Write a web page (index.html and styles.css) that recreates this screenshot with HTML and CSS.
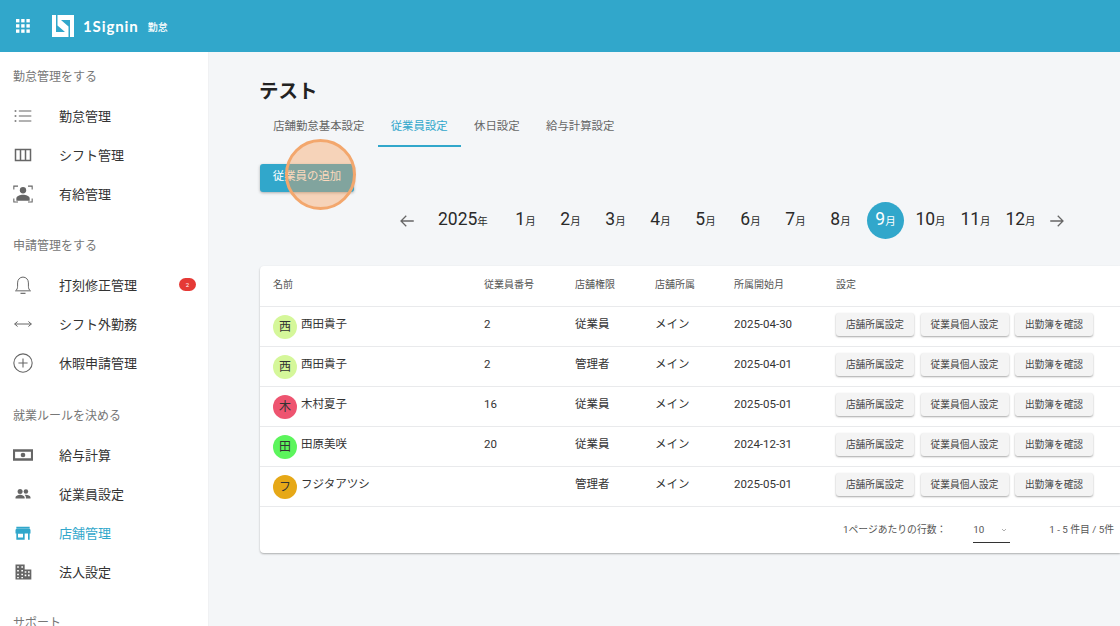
FILE: index.html
```html
<!DOCTYPE html>
<html lang="ja">
<head>
<meta charset="utf-8">
<title>1Signin 勤怠</title>
<link rel="stylesheet" href="styles.css">
</head>
<body>
<header class="topbar">
  <svg class="apps" viewBox="0 0 14 14"><g fill="#fff"><rect x="0" y="0" width="3.4" height="3.4"/><rect x="5.2" y="0" width="3.4" height="3.4"/><rect x="10.4" y="0" width="3.4" height="3.4"/><rect x="0" y="5.2" width="3.4" height="3.4"/><rect x="5.2" y="5.2" width="3.4" height="3.4"/><rect x="10.4" y="5.2" width="3.4" height="3.4"/><rect x="0" y="10.4" width="3.4" height="3.4"/><rect x="5.2" y="10.4" width="3.4" height="3.4"/><rect x="10.4" y="10.4" width="3.4" height="3.4"/></g></svg>
  <svg class="logo" viewBox="0 0 22 22"><path fill="#fff" fill-rule="evenodd" d="M0 0H22V22H0ZM4 0V17H13L5.500 10.500V0ZM18 22V5H9L16.500 11.500V22Z"/></svg>
  <span class="brand">1Signin</span>
  <span class="brand-sub">勤怠</span>
</header>
<div class="layout">
  <nav class="sidebar">
    <div class="nav-label">勤怠管理をする</div>
    <a class="nav-item"><svg class="ico" viewBox="0 0 24 24"><path d="M7 6h15M7 12h15M7 18h15" stroke="#666" stroke-width="1.4" fill="none"/><path d="M2 5h2v2H2zM2 11h2v2H2zM2 17h2v2H2z" fill="#666"/></svg><span>勤怠管理</span></a>
    <a class="nav-item"><svg class="ico" viewBox="0 0 24 24"><path d="M3 5.500h18v13H3zM9 5.500v13M15 5.500v13" stroke="#666" stroke-width="1.800" fill="none"/></svg><span>シフト管理</span></a>
    <a class="nav-item"><svg class="ico" viewBox="0 0 24 24"><path d="M1 6.500V2.500h5M18 2.500h5V6.500M1 17.500v4h5M23 17.500v4h-5" stroke="#666" stroke-width="1.300" fill="none"/><circle cx="12" cy="7.500" r="3.800" fill="#666"/><path d="M4 20v-2.500c0-3 4.500-4.500 8-4.500s8 1.500 8 4.500V20z" fill="#666"/></svg><span>有給管理</span></a>

    <div class="nav-label second">申請管理をする</div>
    <a class="nav-item"><svg class="ico" viewBox="0 0 24 24"><path d="M3 19c1.800-1.200 2.500-3 2.500-5.500v-4C5.500 5.500 8.200 2.500 12 2.500s6.500 3 6.500 7v4c0 2.500.7 4.300 2.500 5.500z" stroke="#666" stroke-width="1.200" fill="none"/><path d="M9 22h6" stroke="#666" stroke-width="1.400"/></svg><span>打刻修正管理</span><b class="badge">2</b></a>
    <a class="nav-item"><svg class="ico" viewBox="0 0 24 24"><path d="M2 12h20M5.500 9 2 12l3.500 3M18.500 9l3.500 3-3.500 3" stroke="#666" stroke-width="1.200" fill="none"/></svg><span>シフト外勤務</span></a>
    <a class="nav-item"><svg class="ico" viewBox="0 0 24 24"><circle cx="12" cy="12" r="11" stroke="#666" stroke-width="1.300" fill="none"/><path d="M12 6.500v11M6.500 12h11" stroke="#666" stroke-width="1.300"/></svg><span>休暇申請管理</span></a>

    <div class="nav-label third">就業ルールを決める</div>
    <a class="nav-item"><svg class="ico" viewBox="0 0 24 24"><path fill="#666" fill-rule="evenodd" d="M0 5h24v14H0zM2.500 8v8h19V8z"/><circle cx="12" cy="12" r="2.800" fill="#666"/></svg><span>給与計算</span></a>
    <a class="nav-item"><svg class="ico" viewBox="0 0 24 24"><circle cx="8.500" cy="9" r="3" fill="#666"/><circle cx="15.500" cy="9" r="2.700" fill="#666"/><path d="M3 17.500v-1.200c0-2 3.500-3.300 5.500-3.300s5.500 1.300 5.500 3.300v1.200zM15.500 17.500v-1.500c0-1.200-.6-2.200-1.500-2.900 3-.4 7 .9 7 2.900v1.500z" fill="#666"/></svg><span>従業員設定</span></a>
    <a class="nav-item active"><svg class="ico" viewBox="0 0 24 24"><path fill="#31a7cb" d="M4 4.500h16v2H4zM3 8l1-1h16l1 1v4.500h-1V20h-2v-7.500h-4V20H4v-7.500H3zM6 13v4.500h6V13z"/></svg><span>店舗管理</span></a>
    <a class="nav-item"><svg class="ico" viewBox="0 0 24 24"><path fill="#666" fill-rule="evenodd" d="M3 3h11v6h8v12H3zM5 5v2h2V5zM10 5v2h2V5zM5 9.500v2h2v-2zM10 9.500v2h2v-2zM5 14v2h2v-2zM10 14v2h2v-2zM5 18v1.500h2V18zM10 18v1.500h2V18zM14 11v2h2v-2zM18 11v2h2v-2zM14 15v2h2v-2zM18 15v2h2v-2z"/></svg><span>法人設定</span></a>

    <div class="nav-label fourth">サポート</div>
  </nav>

  <main class="content">
    <h1 class="title">テスト</h1>
    <div class="tabs">
      <a class="tab">店舗勤怠基本設定</a>
      <a class="tab active">従業員設定</a>
      <a class="tab">休日設定</a>
      <a class="tab">給与計算設定</a>
    </div>
    <button class="add-btn">従業員の追加</button>
    <div class="months">
      <svg class="arrow first" viewBox="0 0 24 24"><path d="M21 12H4M11 5 4 12l7 7" stroke="#666" stroke-width="1.700" fill="none"/></svg>
      <span class="year">2025<small>年</small></span>
      <span class="month">1<small>月</small></span>
      <span class="month">2<small>月</small></span>
      <span class="month">3<small>月</small></span>
      <span class="month">4<small>月</small></span>
      <span class="month">5<small>月</small></span>
      <span class="month">6<small>月</small></span>
      <span class="month">7<small>月</small></span>
      <span class="month">8<small>月</small></span>
      <span class="month current">9<small>月</small></span>
      <span class="month">10<small>月</small></span>
      <span class="month">11<small>月</small></span>
      <span class="month">12<small>月</small></span>
      <svg class="arrow last" viewBox="0 0 24 24"><path d="M3 12h17M13 5l7 7-7 7" stroke="#666" stroke-width="1.700" fill="none"/></svg>
    </div>
    <section class="card">
      <table class="staff">
        <thead>
          <tr><th class="c-name">名前</th><th class="c-no">従業員番号</th><th class="c-role">店舗権限</th><th class="c-store">店舗所属</th><th class="c-date">所属開始月</th><th>設定</th></tr>
        </thead>
        <tbody>
          <tr><td><div class="person"><i class="avatar lime">西</i>西田貴子</div></td><td>2</td><td>従業員</td><td>メイン</td><td>2025-04-30</td><td><div class="actions"><button>店舗所属設定</button><button>従業員個人設定</button><button>出勤簿を確認</button></div></td></tr>
          <tr><td><div class="person"><i class="avatar lime">西</i>西田貴子</div></td><td>2</td><td>管理者</td><td>メイン</td><td>2025-04-01</td><td><div class="actions"><button>店舗所属設定</button><button>従業員個人設定</button><button>出勤簿を確認</button></div></td></tr>
          <tr><td><div class="person"><i class="avatar red">木</i>木村夏子</div></td><td>16</td><td>従業員</td><td>メイン</td><td>2025-05-01</td><td><div class="actions"><button>店舗所属設定</button><button>従業員個人設定</button><button>出勤簿を確認</button></div></td></tr>
          <tr><td><div class="person"><i class="avatar green">田</i>田原美咲</div></td><td>20</td><td>従業員</td><td>メイン</td><td>2024-12-31</td><td><div class="actions"><button>店舗所属設定</button><button>従業員個人設定</button><button>出勤簿を確認</button></div></td></tr>
          <tr><td><div class="person"><i class="avatar amber">フ</i>フジタアツシ</div></td><td></td><td>管理者</td><td>メイン</td><td>2025-05-01</td><td><div class="actions"><button>店舗所属設定</button><button>従業員個人設定</button><button>出勤簿を確認</button></div></td></tr>
        </tbody>
      </table>
      <div class="pager">
        <span class="pager-label">1ページあたりの行数：</span>
        <span class="select">10<svg viewBox="0 0 10 10"><path d="M3 4l2 2 2-2" stroke="#999" stroke-width=".8" fill="none"/></svg></span>
        <span class="range">1 - 5 件目 / 5件</span>
      </div>
    </section>
    <div class="spot"></div>
  </main>
</div>
</body>
</html>
```
FILE: styles.css
```css
* { box-sizing: border-box; }
html, body { margin: 0; height: 100%; overflow: hidden; }
body {
  font-family: Roboto, "Noto Sans CJK JP", sans-serif;
  color: #2a2a2a;
  background: #f4f6f8;
}
.topbar {
  height: 52px;
  background: #31a7cb;
  display: flex;
  align-items: center;
  padding-left: 16px;
  color: #fff;
}
.apps { width: 14px; height: 14px; }
.logo { width: 22px; height: 22px; margin-left: 22px; }
.brand { margin-left: 9px; font-size: 15px; font-weight: 700; letter-spacing: .9px; font-family: Lato, Roboto, sans-serif; }
.brand-sub { margin-left: 9px; font-size: 10px; font-weight: 500; }

.layout { display: flex; height: 574px; }
.sidebar {
  width: 209px;
  flex: none;
  background: #fff;
  border-right: 1px solid #f0f1f3;
  padding: 15px 0 0 13px;
  overflow: hidden;
}
.nav-label { font-size: 12px; line-height: 20px; height: 20px; color: #777; }
.nav-label.second { margin-top: 23px; }
.nav-label.third { margin-top: 24px; }
.nav-label.fourth { margin-top: 22px; }
.nav-item {
  display: flex;
  align-items: center;
  height: 39px;
  font-size: 13px;
  color: #333;
  position: relative;
}
.nav-label + .nav-item { margin-top: 9px; }
.ico { width: 20px; height: 20px; flex: none; }
.nav-item span { margin-left: 26px; }
.nav-item.active { color: #31a7cb; }
.badge {
  position: absolute;
  left: 166px;
  top: 13px;
  width: 17px;
  height: 13px;
  border-radius: 7px;
  background: #e53935;
  color: #fff;
  font-size: 6px;
  font-weight: 400;
  line-height: 13px;
  text-align: center;
}

.content { flex: 1; min-width: 0; padding: 27px 0 0 51px; position: relative; }
.title { margin: 0 0 0 -1px; font-size: 19.5px; line-height: 26px; font-weight: 700; color: #222; }
.tabs { display: flex; height: 42px; }
.tab {
  padding: 0 13.2px;
  font-size: 11.4px;
  line-height: 43px;
  height: 42px;
  color: #666;
}
.tab.active { color: #31a7cb; border-bottom: 2px solid #31a7cb; }
.add-btn {
  display: block;
  margin-top: 17px;
  width: 94px;
  height: 28px;
  border: 0;
  border-radius: 3px;
  padding: 0 0 7px;
  background: #31a7cb;
  color: #fff;
  font: 11.4px Roboto, "Noto Sans CJK JP", sans-serif;
  box-shadow: 0 1px 3px rgba(0,0,0,.3);
}
.months {
  display: flex;
  align-items: center;
  height: 37px;
  margin: 10px 0 27px 138px;
  color: #2a2a2a;
  font-size: 17.5px;
}
.months small { font-size: 10.5px; }
.arrow { width: 18px; height: 18px; flex: none; }
.arrow.first { margin-right: 22px; }
.arrow.last { margin-left: 5px; }
.year { width: 65px; height: 37px; line-height: 34px; white-space: nowrap; }
.month { width: 45px; height: 37px; line-height: 34px; text-align: center; border-radius: 50%; flex: none; white-space: nowrap; }
.month.current { width: 37px; margin: 0 4px; background: #31a7cb; color: #fff; }
.card {
  background: #fff;
  border-radius: 4px 0 0 4px;
  box-shadow: 0 1px 2px rgba(0,0,0,.3);
  height: 287px;
}
.staff { border-collapse: collapse; table-layout: fixed; width: 860px; }
.staff th {
  height: 40px;
  padding: 0 0 2px 13px;
  text-align: left;
  font-size: 10px;
  line-height: 14px;
  font-weight: 400;
  color: #555;
}
.c-name { width: 211px; }
.c-no { width: 91px; }
.c-role { width: 80px; }
.c-store { width: 79px; }
.c-date { width: 102px; }
.staff th, .staff td { border-bottom: 1px solid #e9eaec; }
.staff td { height: 40px; padding: 0 0 5px 13px; font-size: 11.5px; line-height: 16px; color: #333; }
.person { display: flex; align-items: center; gap: 4px; }
.avatar {
  width: 24px;
  height: 24px;
  border-radius: 50%;
  display: flex;
  align-items: center;
  justify-content: center;
  font-style: normal;
  font-size: 12px;
  flex: none;
  position: relative;
  top: 3px;
}
.lime { background: #d5f79a; }
.red { background: #ee5470; }
.green { background: #5cf55c; }
.amber { background: #e6a817; }
.actions { display: flex; gap: 6.5px; position: relative; top: 1px; }
.actions button {
  height: 23px;
  width: 78px;
  padding: 0;
  border: 0;
  border-radius: 3px;
  background: #f4f4f4;
  color: #444;
  font: 9.7px/14px Roboto, "Noto Sans CJK JP", sans-serif;
  box-shadow: 0 1px 2px rgba(0,0,0,.35);
  white-space: nowrap;
}
.actions button:nth-child(2) { width: 88px; }
.pager {
  display: flex;
  align-items: center;
  height: 46px;
  padding: 0 0 2px 583px;
  font-size: 9.8px;
  color: #555;
  white-space: nowrap;
}
.select {
  margin-left: 27px;
  width: 37px;
  height: 24px;
  margin-top: 4px;
  line-height: 22px;
  border-bottom: 1px solid #333;
  display: flex;
  align-items: center;
  justify-content: space-between;
}
.select svg { width: 10px; height: 10px; margin-right: 1px; }
.range { margin-left: 39px; }
.spot {
  position: absolute;
  left: 76px;
  top: 87px;
  width: 71px;
  height: 71px;
  border-radius: 50%;
  background: rgba(250,160,90,.4);
  border: 3px solid #f3a76d;
}
```
